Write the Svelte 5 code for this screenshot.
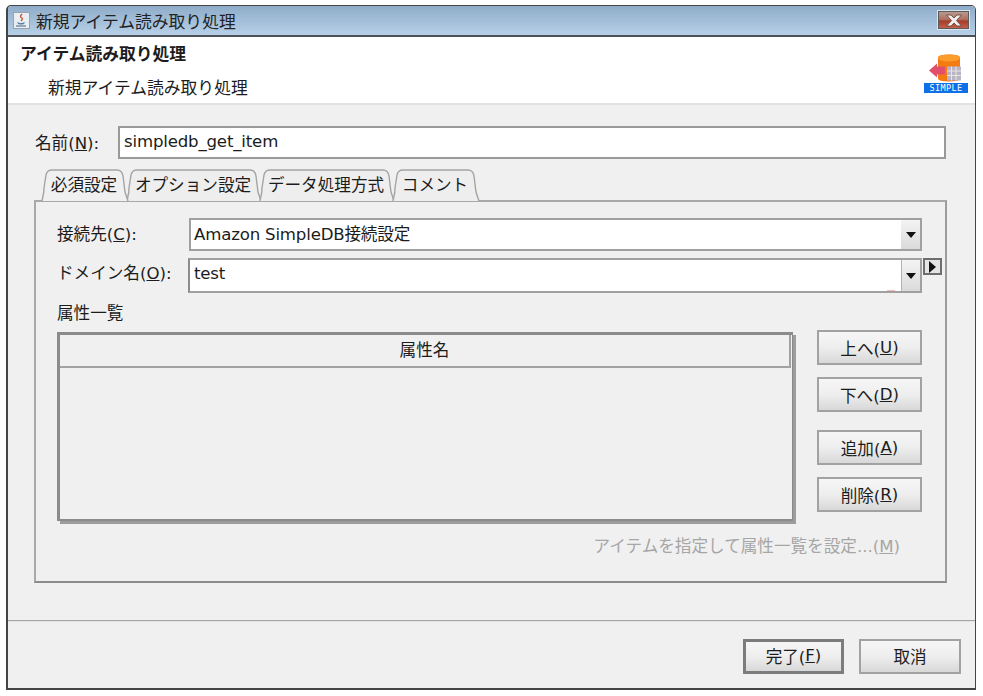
<script>
	const tabs = [
		{ label: '必須設定', w: 85, active: true },
		{ label: 'オプション設定', w: 133 },
		{ label: 'データ処理方式', w: 133 },
		{ label: 'コメント', w: 85 }
	]
	const sideButtons = [
		{ text: '上へ', key: 'U', cls: '' },
		{ text: '下へ', key: 'D', cls: '' },
		{ text: '追加', key: 'A', cls: 'spaced' },
		{ text: '削除', key: 'R', cls: '' }
	]

	function tabPath(w) {
		return `M1 33 L2 28 Q3 25 3 20 L5 7 Q6 2 11 2 L${w - 9} 2 Q${w - 4} 2 ${w - 3} 8 L${w - 1} 24 L${w + 2} 33`
	}
</script>

<div class="window">
	<div class="titlebar">
		<svg class="java" width="17" height="17" viewBox="0 0 17 17">
			<rect x="0.5" y="0.5" width="16" height="16" fill="#e9eef3" stroke="#9aa3ad" />
			<path d="M9 2 Q6 5 9 6 Q10 7 8 9" fill="none" stroke="#c8502a" stroke-width="1.3" />
			<path d="M4 10 Q8 12 12 10 L11 12 Q8 13 5 12 Z" fill="#5b7fa6" />
			<path d="M3 14 H13" stroke="#44617f" stroke-width="1.2" />
		</svg>
		<span class="title">新規アイテム読み取り処理</span>
		<div class="close">
			<svg width="18" height="13" viewBox="0 0 18 13">
				<path d="M1.5 1 H6 L9 4 L12 1 H16.5 L11.5 6.5 L16.5 12 H12 L9 9 L6 12 H1.5 L6.5 6.5 Z" fill="#f1ece9" stroke="#5c3a33" stroke-width="0.8" />
			</svg>
		</div>
	</div>

	<div class="banner">
		<div>
			<div class="heading">アイテム読み取り処理</div>
			<div class="subheading">新規アイテム読み取り処理</div>
		</div>
		<div class="logo">
			<svg width="34" height="29" viewBox="0 0 34 29">
				<path d="M10 4 Q10 1 21 1 Q32 1 32 4 V25 Q32 28 21 28 Q10 28 10 25 Z" fill="#f47a12" />
				<ellipse cx="21" cy="4.5" rx="11" ry="3.5" fill="#fb9c2c" />
				<path d="M1 17 L9 10 V13 H17 V21 H9 V24 Z" fill="#e0506c" />
				<rect x="19" y="13" width="14" height="14" fill="#b8b4c8" />
				<path d="M19 17.5 H33 M19 22 H33 M23.5 13 V27 M28 13 V27" stroke="#ece6dc" stroke-width="1" />
			</svg>
			<span class="logo-text">SIMPLE</span>
		</div>
	</div>

	<div class="body">
		<div class="name-row">
			<span class="label">名前(<u>N</u>):</span>
			<div class="field name-field">simpledb_get_item</div>
		</div>

		<div class="tabs">
			{#each tabs as tab}
				<div class="tab" class:active={tab.active} style="width: {tab.w}px">
					<svg width={tab.w + 4} height="34" viewBox="0 0 {tab.w + 4} 34">
						<path d={tabPath(tab.w)} fill={tab.active ? '#f0f0f0' : '#eeeeee'} stroke="#a4a4a4" stroke-width="1.4" />
					</svg>
					<span>{tab.label}</span>
				</div>
			{/each}
		</div>

		<div class="panel">
			<div class="form-row first">
				<span class="label form-label">接続先(<u>C</u>):</span>
				<div class="combo">
					<div class="combo-text">Amazon SimpleDB接続設定</div>
					<div class="combo-arrow"><i></i></div>
				</div>
			</div>
			<div class="form-row second">
				<span class="label form-label">ドメイン名(<u>O</u>):</span>
				<div class="combo tall">
					<div class="combo-text">test<b class="squiggle"></b></div>
					<div class="combo-arrow"><i></i></div>
				</div>
				<div class="expand"><i></i></div>
			</div>

			<div class="list-title">属性一覧</div>

			<div class="list-row">
				<div class="table">
					<div class="table-head">属性名</div>
				</div>
				<div class="side-buttons">
					{#each sideButtons as b}
						<div class="button side {b.cls}">{b.text}(<u>{b.key}</u>)</div>
					{/each}
				</div>
			</div>

			<div class="disabled-link">アイテムを指定して属性一覧を設定...(<u>M</u>)</div>
		</div>

		<div class="separator"></div>

		<div class="footer">
			<div class="button primary">完了(<u>F</u>)</div>
			<div class="button cancel">取消</div>
		</div>
	</div>
</div>

<style>
:global(body) {
	background: #fff;
}
* {
	box-sizing: border-box;
}
.window {
	width: 970px;
	height: 685px;
	margin: 5px 0 0 6px;
	display: flex;
	flex-direction: column;
	border: 2px solid #454545;
	border-top-width: 1px;
	border-right-width: 1px;
	border-radius: 5px 5px 0 0;
	background: #f0f0f0;
	font-family: "DejaVu Sans", "Noto Sans CJK JP", sans-serif;
	font-size: 16.6px;
	color: #1c1c1c;
	overflow: hidden;
}
.titlebar {
	height: 31px;
	flex: none;
	display: flex;
	align-items: center;
	padding: 0 6px 0 5px;
	background: linear-gradient(#8eacc9, #b7d0e8);
	border-bottom: 2px solid #4b5157;
}
.java {
	margin-right: 6px;
}
.title {
	flex: 1;
	font-size: 16.8px;
	color: #222;
}
.close {
	width: 31px;
	height: 18px;
	margin-top: -1px;
	display: flex;
	align-items: center;
	justify-content: center;
	background: linear-gradient(#b89a92 0%, #b06a5c 50%, #a63a28 55%, #c2604c 100%);
	border: 1px solid #5e5a58;
	box-shadow: 0 0 0 1px #d8e4ef;
}
.banner {
	height: 68px;
	flex: none;
	display: flex;
	justify-content: space-between;
	background: #fff;
	border-bottom: 2px solid #e2e2e2;
	padding: 5px 7px 0 12px;
}
.heading {
	font-size: 16.8px;
	font-weight: 700;
	line-height: 24px;
}
.subheading {
	font-size: 16.8px;
	line-height: 24px;
	margin: 10px 0 0 28px;
}
.logo {
	width: 44px;
	display: flex;
	flex-direction: column;
	align-items: center;
	margin-top: 11px;
}
.logo svg {
	margin-left: -2px;
	display: block;
	height: 30px;
}
.logo-text {
	width: 44px;
	height: 10px;
	margin-top: 0;
	background: #0f6fe6;
	color: #fff;
	font-family: "DejaVu Sans Mono", monospace;
	font-size: 8.5px;
	line-height: 10px;
	text-align: center;
	letter-spacing: 0.4px;
}
.body {
	flex: 1;
	display: flex;
	flex-direction: column;
	padding-top: 21px;
}
.name-row {
	display: flex;
	align-items: center;
	padding-left: 27px;
}
.name-row .label {
	width: 83px;
	margin-top: -2px;
}
.label {
	white-space: nowrap;
}
.field {
	width: 828px;
	height: 33px;
	padding-left: 4px;
	line-height: 27px;
	letter-spacing: -0.18px;
	background: #fff;
	border: 2px solid #9a9a9a;
}
.tabs {
	display: flex;
	height: 32px;
	margin: 9px 0 0 33px;
	position: relative;
	z-index: 1;
}
.tab {
	position: relative;
	height: 34px;
	text-align: center;
	padding-top: 5px;
	line-height: 25px;
}
.tab svg {
	position: absolute;
	left: 0;
	top: 0;
}
.tab span {
	position: relative;
	white-space: nowrap;
	margin-left: 1px;
}
.tab.active {
	z-index: 1;
}
.panel {
	width: 913px;
	height: 383px;
	margin-left: 26px;
	border: 2px solid #a8a8a8;
	border-bottom-color: #8c8c8c;
	border-right-color: #9c9c9c;
	padding: 16px 0 0 21px;
}
.form-row {
	display: flex;
	align-items: center;
}
.form-row.second {
	margin-top: 7px;
	align-items: flex-start;
}
.form-label {
	width: 132px;
	line-height: 28px;
}
.second .form-label {
	width: 131px;
	line-height: 32px;
}
.combo {
	width: 733px;
	height: 33px;
	display: flex;
	background: #fff;
	border: 2px solid #a0a0a0;
}
.combo.tall {
	width: 734px;
	height: 35px;
	border-left-color: #8c8c8c;
	border-right: none;
}
.combo-text {
	flex: 1;
	position: relative;
	padding-left: 3px;
	line-height: 30px;
	letter-spacing: -0.18px;
}
.squiggle {
	position: absolute;
	left: 697px;
	bottom: 0;
	width: 8px;
	height: 1px;
	background: #f3b9b9;
}
.tall .combo-text {
	line-height: 27px;
	padding-left: 4px;
}
.combo-arrow {
	width: 19px;
	display: flex;
	align-items: center;
	justify-content: center;
	background: linear-gradient(#f4f4f4, #dadada);
}
.tall .combo-arrow {
	width: 21px;
	border-left: 1px solid #b4b4b4;
	border-right: 2px solid #a0a0a0;
}
.combo-arrow i {
	width: 0;
	height: 0;
	border-left: 5.5px solid transparent;
	border-right: 5.5px solid transparent;
	border-top: 6px solid #111;
}
.expand {
	width: 19px;
	height: 17px;
	margin-left: 1px;
	display: flex;
	align-items: center;
	justify-content: center;
	background: #e4e4e4;
	border: 2px solid #6e6e6e;
}
.expand i {
	width: 0;
	height: 0;
	border-top: 6px solid transparent;
	border-bottom: 6px solid transparent;
	border-left: 7px solid #111;
}
.list-title {
	margin-top: 8px;
	line-height: 26px;
}
.list-row {
	display: flex;
	align-items: flex-start;
	margin-top: 3px;
}
.table {
	width: 736px;
	height: 189px;
	margin-top: 2px;
	border: 3px solid #8b8b8b;
	border-right-width: 1px;
	border-bottom-width: 2px;
	box-shadow: 3px 3px 0 #9c9c9c;
}
.table-head {
	height: 33px;
	width: 731px;
	text-align: center;
	line-height: 32px;
	border-bottom: 2px solid #a2a2a2;
	border-right: 2px solid #a2a2a2;
}
.side-buttons {
	margin-left: 24px;
	display: flex;
	flex-direction: column;
	gap: 12px;
}
.button {
	display: flex;
	align-items: center;
	justify-content: center;
	background: linear-gradient(#f6f6f6 0%, #eeeeee 50%, #d8d8d8 100%);
	border: 2px solid #a2a2a2;
	white-space: nowrap;
}
.side {
	width: 105px;
	height: 35px;
}
.side.spaced {
	margin-top: 6px;
}
.disabled-link {
	width: 843px;
	margin-top: 13px;
	text-align: right;
	color: #a6a6a6;
	line-height: 26px;
}
.separator {
	margin-top: 37px;
	height: 2px;
	background: #a6a6a6;
	border-bottom: 1px solid #e2e2e2;
}
.footer {
	display: flex;
	justify-content: flex-end;
	gap: 15px;
	padding: 17px 14px 0 0;
}
.primary {
	width: 101px;
	height: 35px;
	border: 3px solid #7c7c7c;
	padding-bottom: 2px;
}
.cancel {
	width: 102px;
	height: 35px;
	padding-bottom: 2px;
}
</style>
